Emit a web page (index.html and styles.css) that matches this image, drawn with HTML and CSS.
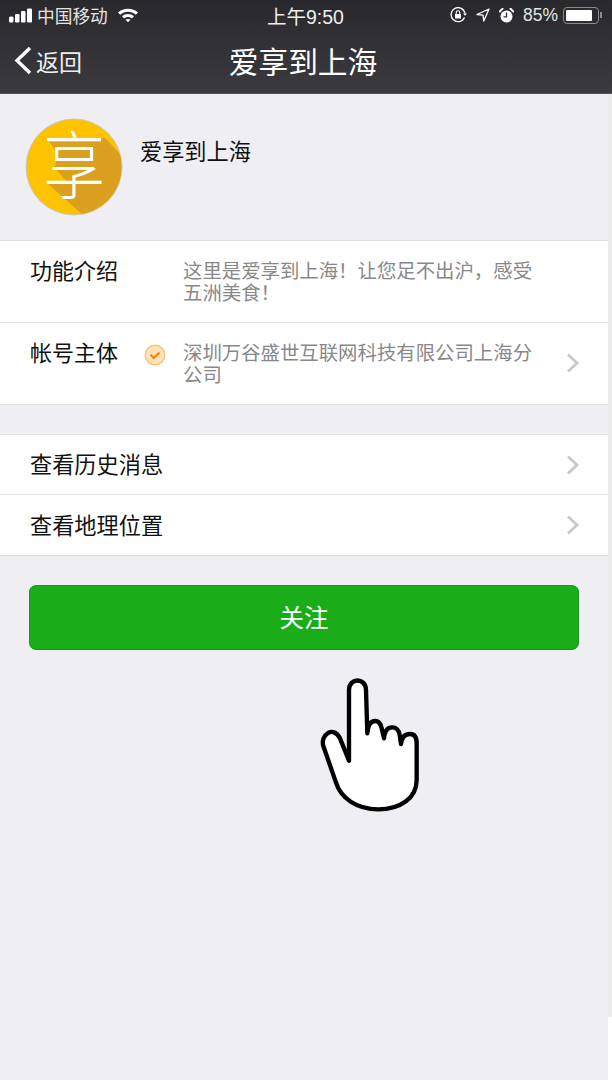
FILE: index.html
```html
<!DOCTYPE html>
<html lang="zh-CN">
<head>
  <meta charset="UTF-8">
  <title>爱享到上海</title>
  <link rel="stylesheet" href="styles.css">
</head>
<body>
  <header class="topbar">
    <div class="status">
      <div class="status-left">
        <svg class="signal" width="24" height="15" viewBox="0 0 24 15">
          <rect x="0" y="8.500" width="4.500" height="6" rx="1.500"/>
          <rect x="6" y="6" width="4.500" height="8.500" rx="1.200"/>
          <rect x="12" y="3" width="4.500" height="11.500" rx="1.200"/>
          <rect x="18" y="0.500" width="5" height="14" rx="1.200"/>
        </svg>
        <span class="carrier">中国移动</span>
        <svg class="wifi" width="22" height="16" viewBox="0 0 22 16">
          <path d="M1 5.500C6.500 .5 15.500 .5 21 5.500L18.800 7.800C14.500 3.800 7.500 3.800 3.200 7.800Z"/>
          <path d="M5 9.300C8.500 6.200 13.500 6.200 17 9.300L14.900 11.400C12.600 9.400 9.400 9.400 7.100 11.400Z"/>
          <path d="M8.600 12.800C10 11.600 12 11.600 13.400 12.800L11 15.300Z"/>
        </svg>
      </div>
      <div class="time">上午9:50</div>
      <div class="status-right">
        <svg width="17" height="16" viewBox="0 0 17 16" fill="none" stroke="#fff">
          <path d="M14.500 10.500A7 7 0 1 1 15 6.500" stroke-width="1.300"/>
          <path d="M13 6.500h4l-2 2.200z" fill="#fff" stroke="none"/>
          <rect x="5" y="7" width="6" height="4.500" fill="#fff" stroke="none"/>
          <path d="M6.200 7V5.500a1.800 1.800 0 0 1 3.600 0V7" stroke-width="1.100"/>
        </svg>
        <svg width="14" height="14" viewBox="0 0 14 14" fill="none" stroke="#fff" stroke-width="1.300">
          <path d="M13 1L1 6.500 7 7.200 7.800 13Z" stroke-linejoin="round"/>
        </svg>
        <svg width="15" height="15" viewBox="0 0 15 15">
          <circle cx="7.500" cy="8.500" r="6" fill="#fff"/>
          <path d="M0.700 3.500L3.500 .8M14.300 3.500L11.500 .8" stroke="#fff" stroke-width="2" stroke-linecap="round"/>
          <path d="M7.500 4.500V8.800H4.500" fill="none" stroke="#333" stroke-width="1.300"/>
        </svg>
        <span class="battery-pct">85%</span>
        <span class="battery"><span class="battery-level"></span></span>
        <span class="battery-tip"></span>
      </div>
    </div>
    <div class="nav">
      <div class="back">
        <svg width="19" height="29" viewBox="0 0 19 29" fill="none" stroke="#fff" stroke-width="3.400">
          <path d="M16 2L3 14.500 16 27"/>
        </svg>
        <span>返回</span>
      </div>
      <div class="nav-title">爱享到上海</div>
      <div></div>
    </div>
  </header>

  <div class="content">
    <main class="main">
      <section class="profile">
        <div class="avatar">
          <svg class="avatar-bg" width="98" height="98" viewBox="-1 -1 98 98">
            <defs>
              <clipPath id="avatarClip"><circle cx="48" cy="48" r="47.500"/></clipPath>
            </defs>
            <circle cx="48" cy="48" r="48" fill="#fdc300" stroke="#c9c9c9" stroke-width="1"/>
            <polygon clip-path="url(#avatarClip)" fill="#dba01f" points="22,21 79,19 97,38 110,50 110,110 57,96 21,64 41,63 29,49 31,33"/>
          </svg>
          <span class="avatar-glyph">享</span>
        </div>
        <div class="profile-name">爱享到上海</div>
      </section>

      <section class="group">
        <div class="info-row">
          <div class="info-label">功能介绍</div>
          <div class="info-mark"></div>
          <div class="info-text">这里是爱享到上海！让您足不出沪，感受五洲美食！</div>
        </div>
        <div class="info-row">
          <div class="info-label">帐号主体</div>
          <div class="info-mark">
            <svg width="22" height="22" viewBox="0 0 22 22" fill="none">
              <circle cx="11" cy="11" r="9.800" fill="#fde4b8" stroke="#fcc27a" stroke-width="1.400"/>
              <path d="M6.500 10.800L9.800 14 15.500 8.500" stroke="#f97d16" stroke-width="2.200"/>
            </svg>
          </div>
          <div class="info-text">深圳万谷盛世互联网科技有限公司上海分公司</div>
          <svg class="chevron" width="14" height="20" viewBox="0 0 14 20" fill="none">
            <path d="M2 1.500L11 10 2 18.500"/>
          </svg>
        </div>
      </section>

      <section class="group group-links">
        <div class="link-row">
          <span>查看历史消息</span>
          <svg class="chevron" width="14" height="20" viewBox="0 0 14 20" fill="none">
            <path d="M2 1.500L11 10 2 18.500"/>
          </svg>
        </div>
        <div class="link-row">
          <span>查看地理位置</span>
          <svg class="chevron" width="14" height="20" viewBox="0 0 14 20" fill="none">
            <path d="M2 1.500L11 10 2 18.500"/>
          </svg>
        </div>
      </section>

      <div class="follow-wrap">
        <button class="follow">关注</button>
      </div>
    </main>
    <div class="edge"></div>
  </div>

  <!-- hand pointer sits over the page -->
  <svg class="hand" width="140" height="150" viewBox="0 0 420 450">
    <path d="M147 272L147 60C147 22 198 22 198 60L202 190C204 165 212 153 225 153C238 153 243 165 245 175L252 205C254 185 262 172 276 172C290 172 297 182 299 195L303 222C305 203 315 192 330 192C345 192 350 205 350 220L350 330C350 385 300 418 235 418C170 418 122 385 107 335L70 228C60 195 100 165 120 205Z" fill="#fff" stroke="#000" stroke-width="13" stroke-linejoin="round" stroke-linecap="round"/>
  </svg>
</body>
</html>
```

FILE: styles.css
```css
* {
  box-sizing: border-box;
}
body {
  margin: 0;
  width: 612px;
  height: 1080px;
  overflow: hidden;
  position: relative;
  background: #fff;
  font-family: "Noto Sans CJK SC", sans-serif;
  color: #111;
}

/* top bar */
.topbar {
  height: 94px;
  color: #fff;
  background: linear-gradient(#29292d, #3a3a3f);
  border-bottom: 1px solid #55555a;
}
.status {
  display: grid;
  grid-template-columns: 1fr auto 1fr;
  align-items: center;
  height: 30px;
  padding: 0 10px 0 9px;
}
.status-left,
.status-right {
  display: flex;
  align-items: center;
}
.status-right {
  justify-content: flex-end;
  gap: 9px;
}
.signal {
  fill: #fff;
  margin-right: 4px;
}
.carrier {
  font-size: 17.700px;
  color: #e4e4e4;
}
.wifi {
  fill: #fff;
  margin-left: 9px;
}
.time {
  font-family: "Liberation Sans", "Noto Sans CJK SC", sans-serif;
  font-size: 19.500px;
  color: #eee;
}
.battery-pct {
  font-family: "Liberation Sans", sans-serif;
  font-size: 17.500px;
  color: #e4e4e4;
}
.battery {
  display: block;
  width: 36px;
  height: 17px;
  margin-left: -4px;
  padding: 2px;
  border: 1px solid #8a8a8e;
  border-radius: 4px;
}
.battery-level {
  display: block;
  width: 26px;
  height: 100%;
  background: #fff;
  border-radius: 1px;
}
.battery-tip {
  width: 2px;
  height: 6px;
  margin-left: -8px;
  background: #8a8a8e;
}
.nav {
  display: grid;
  grid-template-columns: 1fr auto 1fr;
  align-items: center;
  height: 63px;
  padding: 0 20px 2px 14px;
}
.back {
  display: flex;
  align-items: center;
  gap: 3px;
  font-size: 23px;
  color: #eee;
}
.nav-title {
  font-size: 29.700px;
  line-height: 40px;
}

/* page */
.content {
  display: flex;
  align-items: flex-start;
}
.main {
  width: 608px;
  height: 986px;
  background: #eeeef3;
}
.edge {
  width: 4px;
  height: 923px;
  background: #ebebeb;
}
.profile {
  display: flex;
  align-items: flex-start;
  gap: 17px;
  height: 146px;
  padding: 24px 0 0 25px;
}
.avatar {
  position: relative;
  display: flex;
  justify-content: center;
  width: 98px;
  height: 98px;
}
.avatar-bg {
  position: absolute;
  left: 0;
  top: 0;
}
.avatar-glyph {
  position: relative;
  font-size: 62px;
  font-weight: 300;
  line-height: 98px;
  color: #fff;
  transform: translateY(-6px) scaleY(1.200);
}
.profile-name {
  font-size: 22.200px;
  line-height: 32px;
  margin-top: 16px;
}
.group {
  background: #fff;
  border-top: 1px solid #e2e2e2;
  border-bottom: 1px solid #e2e2e2;
}
.group-links {
  margin-top: 29px;
}
.info-row {
  display: flex;
  align-items: flex-start;
  height: 82px;
  padding: 12px 29px 0 30px;
  border-top: 1px solid #e4e4e4;
  position: relative;
}
.info-row:first-child {
  height: 81px;
  border-top: 0;
}
.info-label {
  width: 88px;
  font-size: 22px;
  line-height: 32px;
}
.info-mark {
  width: 65px;
  padding: 13px 0 0 26px;
}
.info-mark svg {
  display: block;
  margin-top: -4px;
}
.info-text {
  width: 356px;
  margin: 6px 0 0 0;
  font-size: 19.400px;
  line-height: 22px;
  color: #888;
}
.chevron {
  flex: none;
  stroke: #c7c7cc;
  stroke-width: 2.800;
}
.info-row .chevron {
  position: absolute;
  right: 28px;
  top: 30px;
}
.link-row {
  display: flex;
  align-items: center;
  justify-content: space-between;
  height: 61px;
  padding: 0 28px 0 30px;
  font-size: 22.200px;
  border-top: 1px solid #e4e4e4;
}
.link-row span {
  margin-bottom: 3px;
}
.link-row:first-child {
  height: 59px;
  border-top: 0;
}
.follow-wrap {
  padding: 29px 29px 0;
}
.follow {
  display: block;
  width: 100%;
  height: 65px;
  padding: 0 0 3px;
  border: 1px solid #189a14;
  border-radius: 7px;
  background: #1aad19;
  color: #fff;
  font-family: inherit;
  font-size: 24.500px;
}

/* pointer overlay */
.hand {
  position: absolute;
  left: 300px;
  top: 670px;
}
```
